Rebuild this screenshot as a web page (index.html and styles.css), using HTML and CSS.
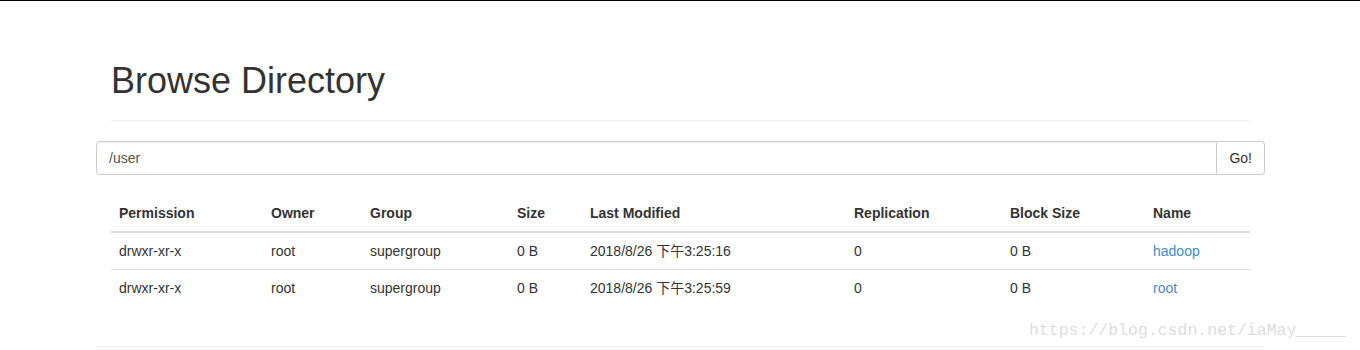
FILE: index.html
```html
<!DOCTYPE html>
<html lang="en">
<head>
    <meta charset="UTF-8">
    <title>Browsing HDFS</title>
    <link rel="stylesheet" href="styles.css">
</head>
<body>
    <div class="container">
        <div class="page-header">
            <h1>Browse Directory</h1>
        </div>

        <div class="row">
            <form class="input-group">
                <input class="form-control" type="text" value="/user">
                <button class="btn" type="button">Go!</button>
            </form>
        </div>

        <table class="table">
            <thead>
                <tr>
                    <th class="c-perm">Permission</th>
                    <th class="c-owner">Owner</th>
                    <th class="c-group">Group</th>
                    <th class="c-size">Size</th>
                    <th class="c-mod">Last Modified</th>
                    <th class="c-repl">Replication</th>
                    <th class="c-block">Block Size</th>
                    <th class="c-name">Name</th>
                </tr>
            </thead>
            <tbody>
                <tr>
                    <td>drwxr-xr-x</td>
                    <td>root</td>
                    <td>supergroup</td>
                    <td>0 B</td>
                    <td>2018/8/26 下午3:25:16</td>
                    <td>0</td>
                    <td>0 B</td>
                    <td><a href="#">hadoop</a></td>
                </tr>
                <tr>
                    <td>drwxr-xr-x</td>
                    <td>root</td>
                    <td>supergroup</td>
                    <td>0 B</td>
                    <td>2018/8/26 下午3:25:59</td>
                    <td>0</td>
                    <td>0 B</td>
                    <td><a href="#">root</a></td>
                </tr>
            </tbody>
        </table>

        <div class="row">
            <hr>
        </div>
    </div>

    <div class="watermark">https://blog.csdn.net/iaMay_____</div>
</body>
</html>
```

FILE: styles.css
```css
html, body {
    margin: 0;
    padding: 0;
}
body {
    font-family: "Liberation Sans", Arial, "Noto Sans CJK SC", sans-serif;
    font-size: 14px;
    line-height: 20px;
    color: #333;
    background: #fff;
    border-top: 1px solid #000;
}
.container {
    width: 1139px;
    padding: 0 15px 0 16px;
    margin: 0 auto;
}
.row {
    margin: 0 -15px;
}
.page-header {
    margin: 60px 0 20px;
    padding-bottom: 9px;
    border-bottom: 1px solid #eee;
}
h1 {
    margin: 0 0 10px;
    font-size: 36px;
    font-weight: 500;
    line-height: 1.1;
}
.input-group {
    display: flex;
    margin: 0;
}
.form-control {
    flex: 1;
    height: 34px;
    box-sizing: border-box;
    padding: 6px 12px;
    font: inherit;
    color: #555;
    border: 1px solid #ccc;
    border-radius: 4px 0 0 4px;
    box-shadow: inset 0 1px 1px rgba(0, 0, 0, .075);
    outline: none;
}
.btn {
    height: 34px;
    padding: 6px 12px;
    font: inherit;
    color: #333;
    background: #fff;
    border: 1px solid #ccc;
    border-left: none;
    border-radius: 0 4px 4px 0;
}
.table {
    width: 100%;
    margin: 20px 0;
    border-collapse: collapse;
    border-spacing: 0;
    table-layout: fixed;
}
.table th,
.table td {
    padding: 8px;
    text-align: left;
    vertical-align: top;
    line-height: 20px;
}
.table th {
    font-weight: bold;
    vertical-align: bottom;
    border-bottom: 2px solid #ddd;
}
.table td {
    border-top: 1px solid #ddd;
}
.c-perm { width: 136px; }
.c-owner { width: 83px; }
.c-group { width: 131px; }
.c-size { width: 57px; }
.c-mod { width: 248px; }
.c-repl { width: 140px; }
.c-block { width: 127px; }
a {
    color: #428bca;
    text-decoration: none;
}
hr {
    margin: 40px 0 0;
    border: 0;
    border-top: 1px solid #eee;
}
.watermark {
    position: absolute;
    left: 1029px;
    top: 321px;
    font-family: "Liberation Mono", monospace;
    font-size: 16.5px;
    line-height: 20px;
    color: #ddd;
}
```
